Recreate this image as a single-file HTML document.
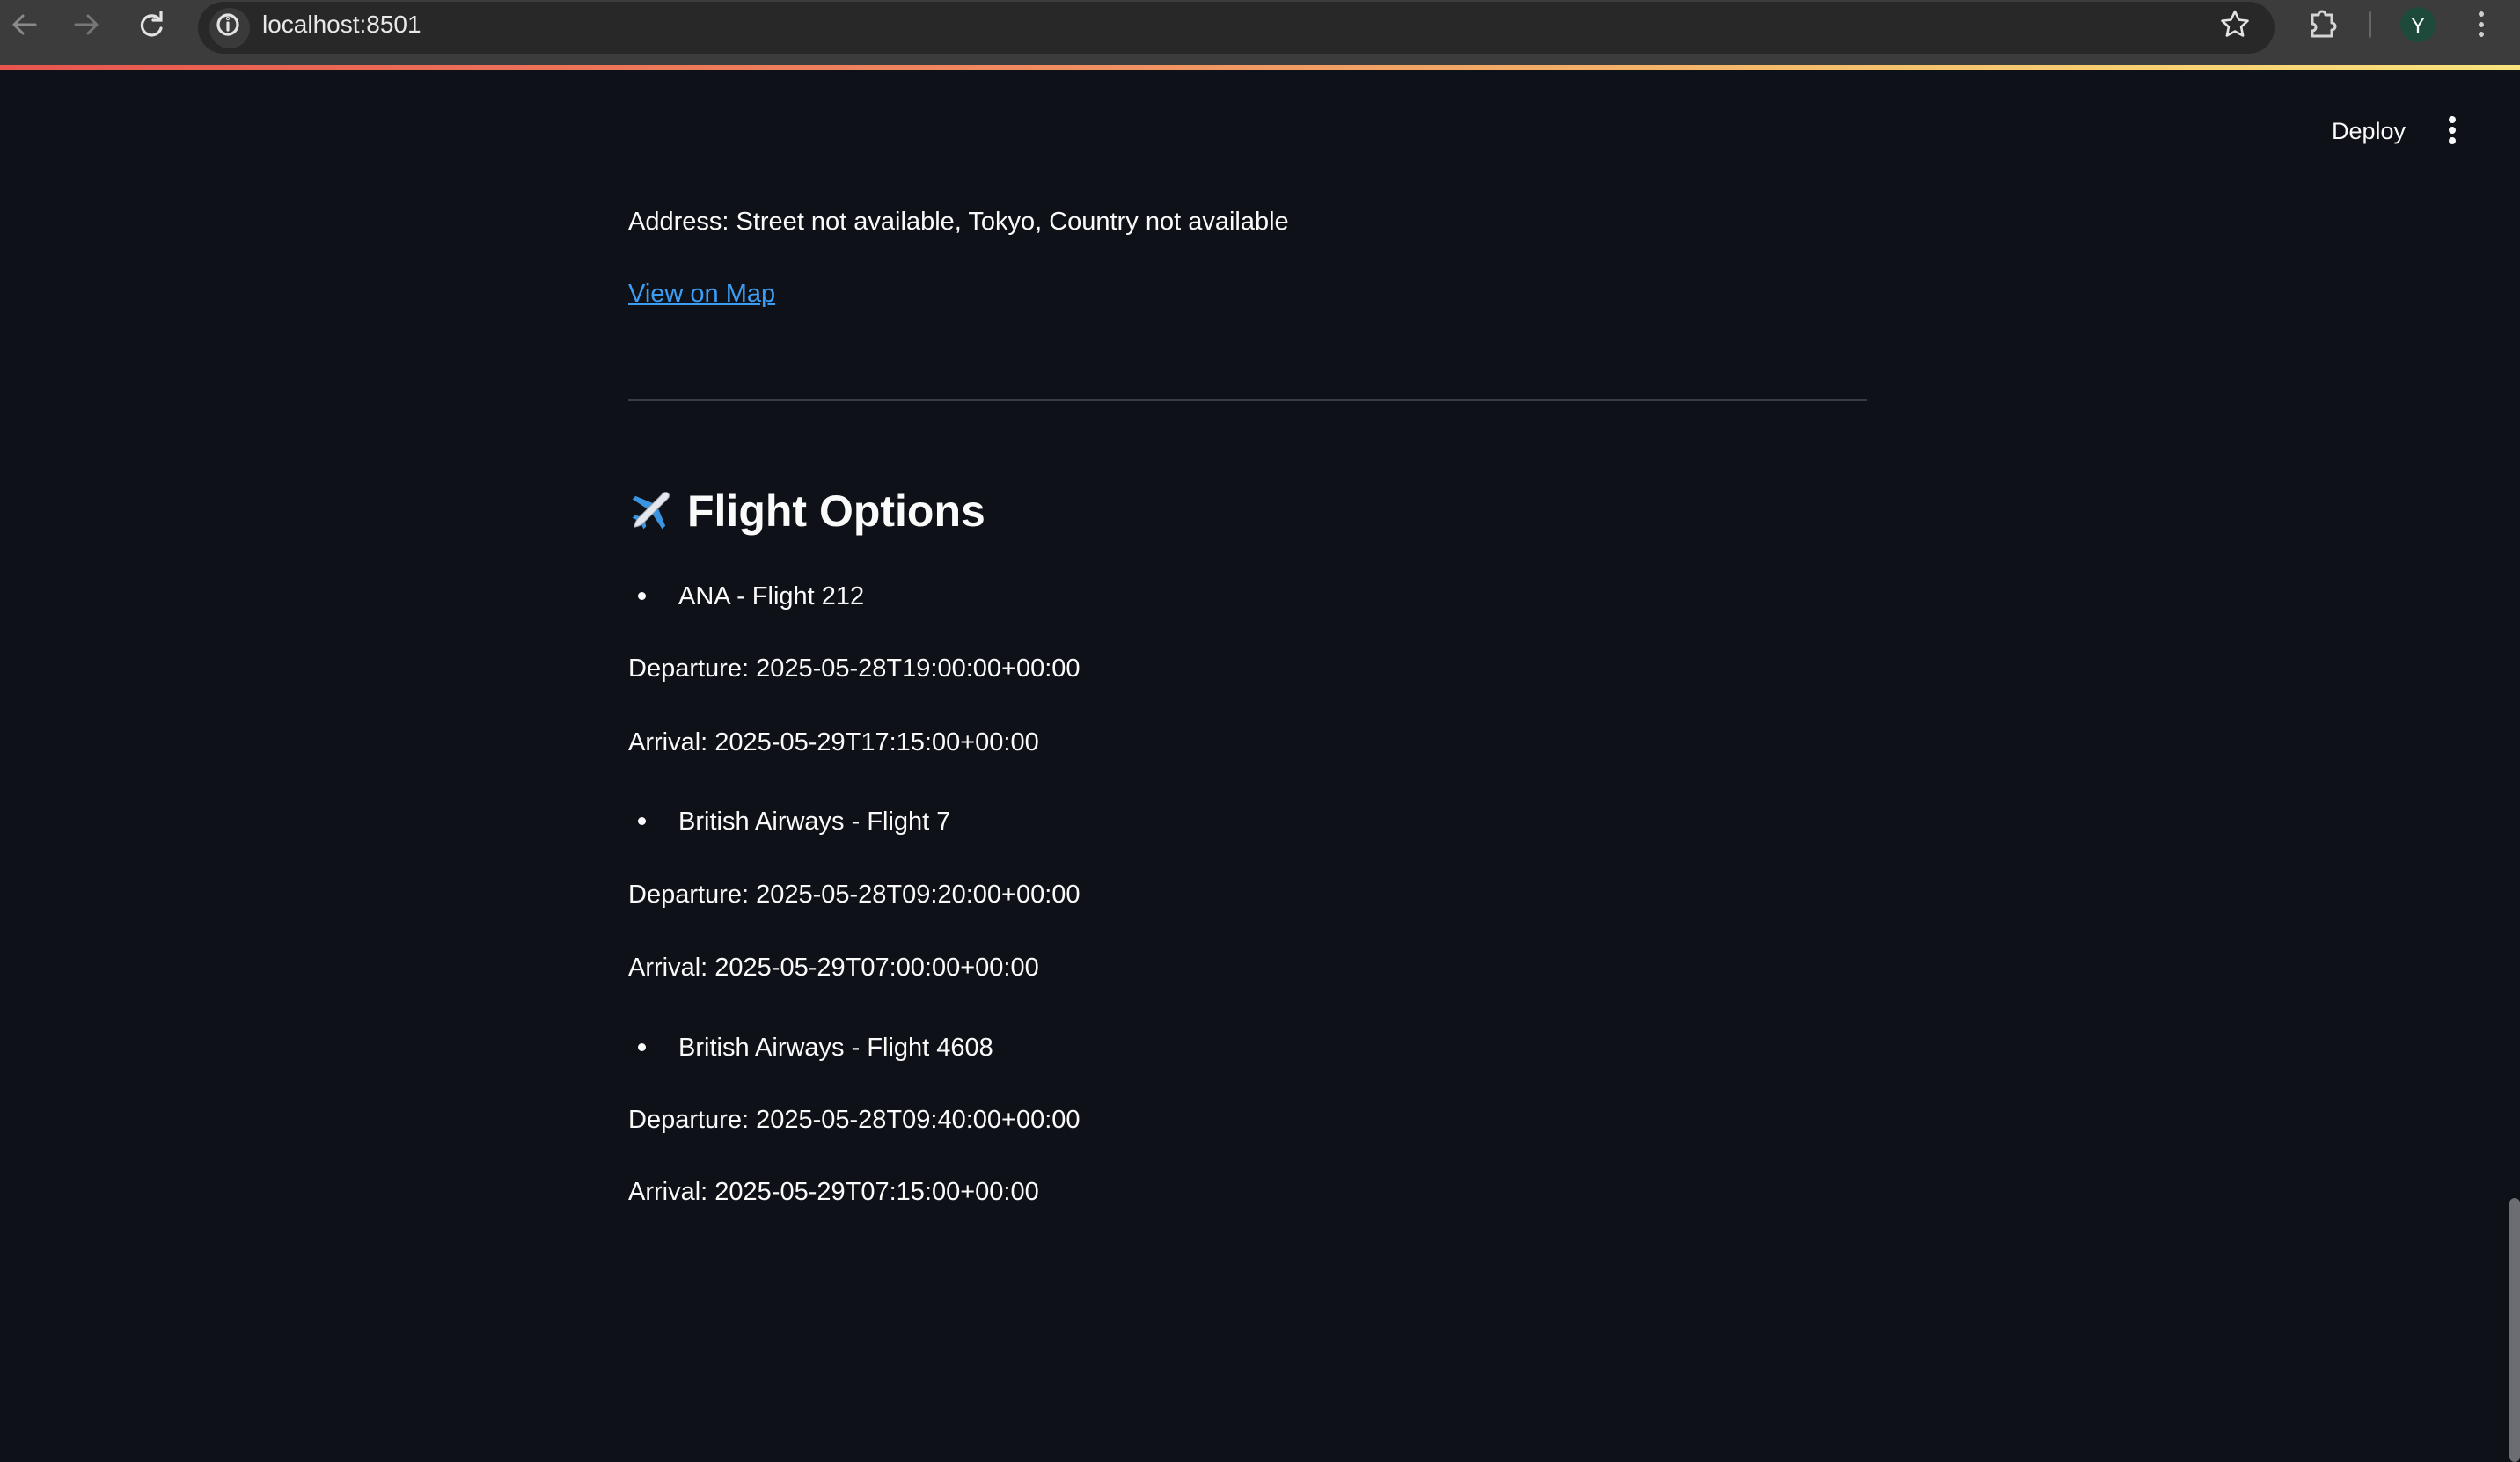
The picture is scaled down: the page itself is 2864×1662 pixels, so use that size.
<!DOCTYPE html>
<html><head><meta charset="utf-8"><style>
html,body{margin:0;padding:0;width:2864px;height:1654px;overflow:hidden;background:#0e1117;font-family:"Liberation Sans",sans-serif;color:#fafafa}
.a{position:absolute;white-space:nowrap;line-height:40px;height:40px}
.t{font-size:29px;left:714px}
</style></head><body>
<div style="position:absolute;left:0;top:0;width:2864px;height:74px;background:#3c3c3c"></div>
<div style="position:absolute;left:0;top:74px;width:2864px;height:6px;background:linear-gradient(90deg,#e8564f,#f08a60 40%,#f5c26c 75%,#fbe37c)"></div>
<div style="position:absolute;left:225px;top:2px;width:2360px;height:59px;border-radius:30px;background:#282828"></div>
<div style="position:absolute;left:238px;top:9px;width:46px;height:46px;border-radius:23px;background:#3a3a3a"></div>
<svg style="position:absolute;left:0;top:0" width="2864" height="74">
<g stroke="#8a8a8a" stroke-width="3" fill="none" stroke-linecap="round" stroke-linejoin="round">
<path d="M40 28H16M26 18l-10 10 10 10"/>
<path d="M86 28h24M100 18l10 10-10 10" stroke="#777"/>
</g>
<g stroke="#e3e3e3" stroke-width="3.2" fill="none" stroke-linecap="round">
<path d="M181 22a11 11 0 1 0 2 10"/><path d="M183 14v9h-9"/>
<circle cx="259" cy="28" r="11"/><path d="M259 26v8"/><circle cx="259" cy="21" r="0.5"/>
</g>
<path d="M2540 13l4.5 9.5 10 1.2-7.4 6.8 2 10-9.1-5-9.1 5 2-10-7.4-6.8 10-1.2z" fill="none" stroke="#e3e3e3" stroke-width="2.6" stroke-linejoin="round"/>
<path d="M2628 17h7a4 4 0 0 1 8 0h7v9a4 4 0 0 1 0 8v7h-22v-6a4 4 0 0 0 0-8z" fill="none" stroke="#d5d5d5" stroke-width="3" stroke-linejoin="round"/>
<rect x="2692" y="13" width="3" height="30" rx="1.5" fill="#666"/>
<circle cx="2748" cy="28" r="20" fill="#1e4a3c"/>
<text x="2748" y="37" font-size="24" fill="#fff" text-anchor="middle" font-family="Liberation Sans">Y</text>
<circle cx="2820" cy="16" r="3" fill="#cfcfcf"/><circle cx="2820" cy="28" r="3" fill="#cfcfcf"/><circle cx="2820" cy="39" r="3" fill="#cfcfcf"/>
</svg>
<div class="a" style="left:298px;top:8px;font-size:28px;color:#e8e8e8">localhost:8501</div>

<div class="a" style="left:2650px;top:129px;font-size:27px">Deploy</div>
<svg style="position:absolute;left:2776px;top:130px" width="22" height="40"><circle cx="11" cy="6" r="4" fill="#fafafa"/><circle cx="11" cy="18" r="4" fill="#fafafa"/><circle cx="11" cy="30" r="4" fill="#fafafa"/></svg>

<div class="a t" style="top:232px">Address: Street not available, Tokyo, Country not available</div>
<div class="a t" style="top:314px;color:#3d9df3;text-decoration:underline">View on Map</div>
<div style="position:absolute;left:714px;top:454px;width:1408px;height:2px;background:#3a3d44"></div>

<svg style="position:absolute;left:712px;top:548px" width="60" height="60" viewBox="0 0 60 60">
<g transform="rotate(45 30 30)">
<path d="M30 24L6 34v5l24-5zM30 24l24 10v5l-24-5z" fill="#3b94e0"/>
<path d="M30 44l-9 6v4l9-3 9 3v-4z" fill="#3b94e0"/>
<path d="M26 10c0-6 8-6 8 0v40c0 4-2 7-4 10-2-3-4-6-4-10z" fill="#e4e8ee" stroke="#9aa3ad" stroke-width="1"/>
</g>
</svg>
<div class="a" style="left:781px;top:555px;height:52px;line-height:52px;font-size:50px;font-weight:bold">Flight Options</div>

<div style="position:absolute;left:725px;top:673px;width:9px;height:9px;border-radius:5px;background:#fafafa"></div>
<div class="a t" style="left:771px;top:658px">ANA - Flight 212</div>
<div class="a t" style="top:740px">Departure: 2025-05-28T19:00:00+00:00</div>
<div class="a t" style="top:824px">Arrival: 2025-05-29T17:15:00+00:00</div>

<div style="position:absolute;left:725px;top:929px;width:9px;height:9px;border-radius:5px;background:#fafafa"></div>
<div class="a t" style="left:771px;top:914px">British Airways - Flight 7</div>
<div class="a t" style="top:997px">Departure: 2025-05-28T09:20:00+00:00</div>
<div class="a t" style="top:1080px">Arrival: 2025-05-29T07:00:00+00:00</div>

<div style="position:absolute;left:725px;top:1186px;width:9px;height:9px;border-radius:5px;background:#fafafa"></div>
<div class="a t" style="left:771px;top:1171px">British Airways - Flight 4608</div>
<div class="a t" style="top:1253px">Departure: 2025-05-28T09:40:00+00:00</div>
<div class="a t" style="top:1335px">Arrival: 2025-05-29T07:15:00+00:00</div>

<div style="position:absolute;left:2852px;top:1362px;width:12px;height:300px;border-radius:6px;background:#6b6d72"></div>
</body></html>
